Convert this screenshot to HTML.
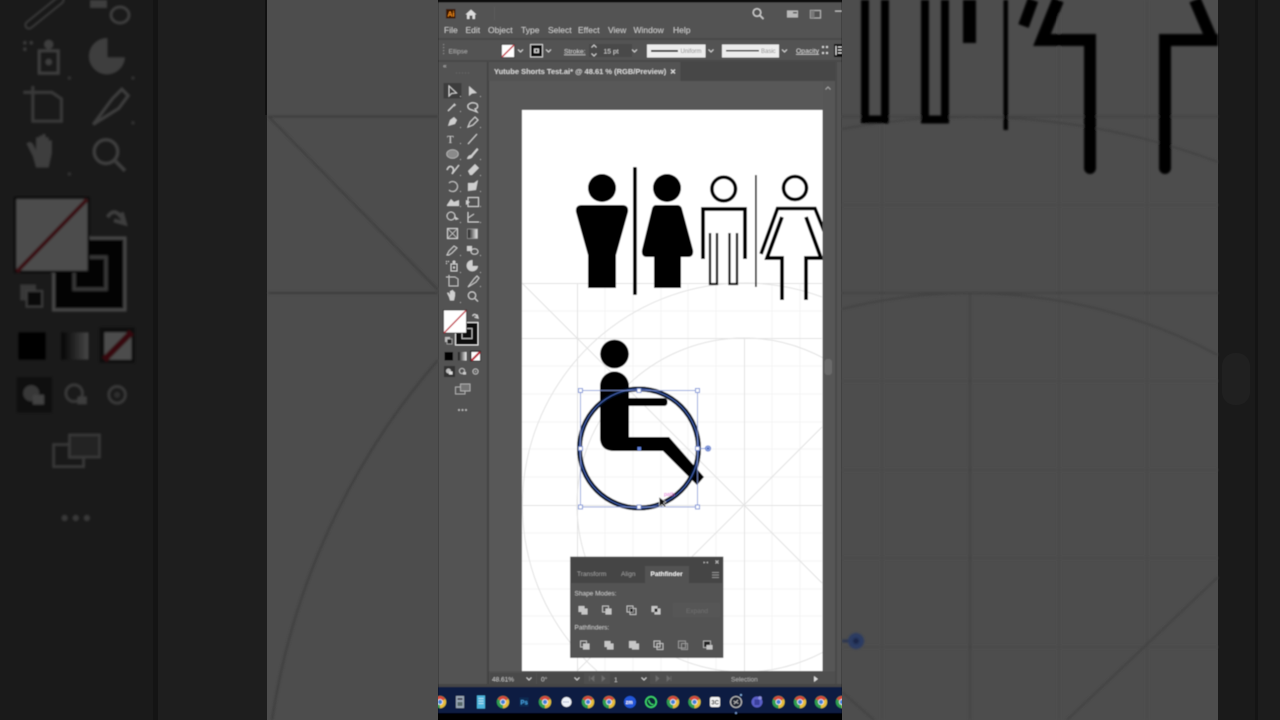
<!DOCTYPE html>
<html><head><meta charset="utf-8"><title>Illustrator</title>
<style>
html,body{margin:0;padding:0;background:#000;width:1280px;height:720px;overflow:hidden}
svg{display:block}
text{font-family:"Liberation Sans",sans-serif}
</style></head><body>
<svg xmlns="http://www.w3.org/2000/svg" width="1280" height="720" viewBox="0 0 1280 720">
<defs>
<filter id="b1" filterUnits="userSpaceOnUse" x="0" y="0" width="1280" height="720"><feGaussianBlur stdDeviation="1.1"/></filter>
<filter id="b0" filterUnits="userSpaceOnUse" x="0" y="0" width="1280" height="720"><feGaussianBlur stdDeviation="0.4"/></filter>
<clipPath id="cMid"><rect x="438" y="0" width="404" height="720"/></clipPath>
<clipPath id="cArt"><rect x="522" y="110" width="300.500" height="561"/></clipPath>
<linearGradient id="gg" x1="0" x2="1" y1="0" y2="0"><stop offset="0" stop-color="#111"/><stop offset="1" stop-color="#eee"/></linearGradient>
<g id="chrome">
<circle r="6.200" fill="#2f9e4f"/>
<path d="M0 0L-5.300 -3A6.200 6.200 0 0 1 5.300 -3Z" fill="#d8463a"/>
<path d="M0 0L5.300 -3A6.200 6.200 0 0 1 0 6.200Z" fill="#e8bd3a"/>
<circle r="3" fill="#eee"/><circle r="2.200" fill="#3f7fd8"/>
</g>
<g id="tl">
<g fill="#cfcfcf">
<rect x="451" y="264" width="6" height="7" fill="none" stroke="#cfcfcf" stroke-width="1"/><circle cx="454" cy="262" r="1.500"/><circle cx="454" cy="267.500" r="1.100"/>
<rect x="446" y="261" width="1" height="1"/><rect x="448" y="261" width="1" height="1"/><rect x="446" y="263" width="1" height="1"/>
<path d="M472.500 260A5.700 5.700 0 1 0 478 266L472.500 266Z"/>
<path d="M449 275V286H458V279L455 277H446" fill="none" stroke="#bfbfbf" stroke-width="1"/>
<path d="M468 287L474 279L477 276L479 278L476 282Z" fill="none" stroke="#cfcfcf" stroke-width="1"/>
<path d="M449 297L447 293Q448 292 449 293L450 295V291H451V290.500H452V290H453V291H454V292H455V296L454 300.500H450Z"/>
<circle cx="472" cy="295.500" r="3.700" fill="none" stroke="#cfcfcf" stroke-width="1.100"/><path d="M475 298.500L478 301.500" stroke="#cfcfcf" stroke-width="1.200"/>
<g fill="#a8a8a8"><rect x="460" y="272" width="1" height="1"/><rect x="480" y="272" width="1" height="1"/><rect x="480" y="286" width="1" height="1"/><rect x="460" y="302" width="1" height="1"/></g>
</g>
<rect x="455.500" y="322.500" width="22.500" height="22.500" fill="#0a0a0a" stroke="#e8e8e8" stroke-width="1"/>
<rect x="462" y="328.500" width="10" height="10" fill="#0a0a0a" stroke="#b8b8b8" stroke-width="1"/>
<rect x="443.500" y="310" width="23" height="23" fill="#fff" stroke="#1a1a1a" stroke-width=".7"/>
<path d="M444 333L466 310.500" stroke="#c12c3c" stroke-width="1.300"/>
<path d="M472.500 316Q475 312 478 318M477 314.500L478 318L474.500 317" fill="none" stroke="#cfcfcf" stroke-width="1.200"/>
<rect x="445" y="337" width="5" height="5" fill="#bbb"/><rect x="447" y="339" width="5" height="5" fill="#222" stroke="#ccc" stroke-width=".6"/>
<rect x="444.500" y="352" width="8.500" height="8.500" fill="#050505"/>
<rect x="458" y="352" width="8.500" height="8.500" fill="url(#gg)"/>
<rect x="470" y="350.500" width="11" height="11" fill="#2e2e2e"/>
<rect x="471.500" y="352" width="8.500" height="8.500" fill="#fff"/>
<path d="M471.500 360.500L480 352" stroke="#b81f30" stroke-width="2"/>
<rect x="444" y="366" width="11" height="11" fill="#333"/>
<circle cx="448.500" cy="371" r="2.500" fill="#bbb"/><rect x="449" y="371.500" width="3.500" height="3" fill="#ddd"/>
<circle cx="462" cy="371" r="2.600" fill="none" stroke="#bbb" stroke-width="1"/><rect x="463" y="372" width="3" height="2.500" fill="#ccc"/>
<circle cx="475.500" cy="371.500" r="2.600" fill="none" stroke="#bbb" stroke-width="1"/><circle cx="475.500" cy="371.500" r="1" fill="#999"/>
<rect x="455.500" y="387" width="9.500" height="7" fill="#555" stroke="#bdbdbd" stroke-width=".8"/>
<rect x="460.500" y="384" width="9.500" height="7" fill="#747474" stroke="#bdbdbd" stroke-width=".8"/>
<g fill="#bdbdbd"><circle cx="459" cy="410" r="1"/><circle cx="462.500" cy="410" r="1"/><circle cx="466" cy="410" r="1"/></g>
</g>
</defs>
<rect width="1280" height="720" fill="#000"/>

<!-- LEFT zoomed dim side -->
<rect x="0" y="0" width="153" height="720" fill="#575757"/>
<rect x="153" y="0" width="5" height="720" fill="#434343"/>
<rect x="158" y="0" width="109" height="720" fill="#646464"/>
<rect x="265" y="0" width="3" height="115" fill="#3a3a3a"/>
<g filter="url(#b1)">
<use href="#tl" transform="matrix(3.18 0 0 3.2 -1395 -794)"/>
<path d="M29 25L60 0" stroke="#cfcfcf" stroke-width="9" stroke-linecap="round" fill="none"/>
<path d="M29 25L60 0" stroke="#555" stroke-width="6" stroke-linecap="round" fill="none"/>
<rect x="90" y="0" width="17" height="8" fill="#cfcfcf"/>
<ellipse cx="120" cy="15" rx="9" ry="8" fill="none" stroke="#cfcfcf" stroke-width="3"/>
</g>
<rect x="0" y="0" width="267" height="720" fill="#000" fill-opacity=".7"/>
<rect x="267" y="0" width="171" height="720" fill="#4d4d4d"/>
<g filter="url(#b1)" fill="none" stroke="#3e3e3e" stroke-width="2">
<path d="M268 116.500H438M268 293H438"/>
<path d="M268 116L438 290"/>
<path d="M272 720A706 710 0 0 1 438 360"/>
</g>

<!-- RIGHT zoomed dim side -->
<rect x="842" y="0" width="376" height="720" fill="#4d4d4d"/>
<rect x="1218" y="0" width="37" height="720" fill="#1a1a1a"/>
<rect x="1255" y="0" width="3" height="720" fill="#141414"/>
<rect x="1258" y="0" width="22" height="720" fill="#1c1c1c"/>
<rect x="1222" y="353" width="28" height="52" rx="13" fill="#202020"/>
<g filter="url(#b1)">
<g fill="none" stroke="#4a4a4a" stroke-width="1.500">
<path d="M882 0V720M1059 0V720M1147 0V720M842 205H1218M842 381H1218M842 470H1218M842 558H1218M842 647H1218"/>
</g>
<g fill="none" stroke="#424242" stroke-width="2">
<path d="M842 116.500H1218M842 293H1218M970 293V720"/>
<path d="M842 129A706 710 0 0 1 1218 162"/>
<path d="M842 309A531 534 0 0 1 1218 355"/>
<path d="M1218 577L1067 720M842 692L874 720"/>
</g>
<g fill="none" stroke="#000">
<path d="M865 0V119.500H885V0M925 0V119.500H945V0" stroke-width="8"/>
<path d="M1033 0L1023.500 26" stroke-width="11"/>
<path d="M1058 0L1042 40H1090V168" stroke-width="12"/>
<path d="M1165 168V40H1218M1195 0L1212 40" stroke-width="12"/>
</g>
<rect x="963" y="0" width="13" height="43" fill="#000"/>
<rect x="1003.500" y="0" width="4.500" height="130" fill="#000"/>
<circle cx="1090" cy="168" r="6" fill="#000"/><circle cx="1165" cy="168" r="6" fill="#000"/>
<path d="M842 641H850" stroke="#26324f" stroke-width="2.500"/>
<circle cx="856" cy="641" r="8" fill="#2a3a62"/><circle cx="856" cy="641" r="3" fill="#1a2746"/>
</g>

<!-- CENTRE -->
<g clip-path="url(#cMid)"><g filter="url(#b0)">
<rect x="438" y="0" width="404" height="720" fill="#535353"/>
<rect x="438" y="0" width="404" height="2.500" fill="#0c0c0c"/>
<rect x="446" y="9" width="9.500" height="9.500" fill="#3a1404"/>
<text x="447.500" y="16.500" font-size="7" font-weight="700" fill="#f08a1c">Ai</text>
<path d="M465.500 14.500L471 9.500L476.500 14.500H475V19H472.500V15.500H469.500V19H467V14.500Z" fill="#dcdcdc"/>
<rect x="494" y="7" width="1" height="13" fill="#5c5c5c"/>
<circle cx="757" cy="12.500" r="3.800" fill="none" stroke="#c8c8c8" stroke-width="1.500"/>
<path d="M760 15.500L763.500 19" stroke="#c8c8c8" stroke-width="1.600"/>
<rect x="787" y="10.500" width="11" height="7" fill="#b8b8b8"/><rect x="793" y="12" width="4" height="1.500" fill="#555"/>
<rect x="810.500" y="10.500" width="10" height="7.500" fill="none" stroke="#b0b0b0" stroke-width="1.200"/><rect x="810.500" y="10.500" width="4" height="7.500" fill="#777"/>
<rect x="835" y="10.500" width="7" height="1.300" fill="#bbb"/>
<g font-size="8.500" fill="#cccccc">
<text x="444" y="33">File</text><text x="465.500" y="33">Edit</text><text x="488" y="33">Object</text><text x="521" y="33">Type</text><text x="548" y="33">Select</text><text x="578" y="33">Effect</text><text x="608" y="33">View</text><text x="633.500" y="33">Window</text><text x="673" y="33">Help</text>
</g>
<rect x="438" y="38" width="404" height="2" fill="#4a4a4a"/>
<g fill="#8a8a8a"><rect x="443" y="44" width="1.200" height="1.200"/><rect x="443" y="47" width="1.200" height="1.200"/><rect x="443" y="50" width="1.200" height="1.200"/><rect x="443" y="53" width="1.200" height="1.200"/></g>
<text x="448.500" y="53.500" font-size="6.500" fill="#ababab">Ellipse</text>
<rect x="501.500" y="44.500" width="13" height="13" fill="#fff" stroke="#222" stroke-width=".6"/>
<path d="M502 57L514 45" stroke="#c22d3a" stroke-width="1.500"/>
<path d="M518 49.500L520.500 52L523 49.500M546 49.500L548.500 52L551 49.500M632 49.500L634.500 52L637 49.500M708.500 49.500L711 52L713.500 49.500M782 49.500L784.500 52L787 49.500" fill="none" stroke="#cfcfcf" stroke-width="1.100"/>
<rect x="530.500" y="44.500" width="12" height="12.500" fill="#0a0a0a" stroke="#e0e0e0" stroke-width=".9"/>
<rect x="534" y="48.500" width="5" height="4.500" fill="#ccc"/><rect x="535.500" y="49.800" width="2" height="2" fill="#111"/>
<text x="564" y="53.500" font-size="6.800" fill="#cfcfcf" text-decoration="underline">Stroke:</text>
<rect x="589" y="44" width="43" height="13" fill="#4a4a4a"/>
<path d="M591.500 47.500L594 45L596.500 47.500M591.500 53.500L594 56L596.500 53.500" fill="none" stroke="#d0d0d0" stroke-width="1"/>
<text x="603.500" y="53.300" font-size="6.800" fill="#d6d6d6">15 pt</text>
<rect x="647" y="44.500" width="58.500" height="13" fill="#ececec"/>
<rect x="651" y="50" width="27" height="1.800" fill="#111"/>
<text x="680.500" y="53" font-size="6" fill="#888">Uniform</text>
<rect x="722" y="44.500" width="57" height="13" fill="#ececec"/>
<rect x="726" y="50" width="33" height="1.500" fill="#111"/>
<text x="761" y="53" font-size="6" fill="#888">Basic</text>
<text x="796" y="53" font-size="6.800" fill="#d8d8d8" text-decoration="underline">Opacity</text>
<g fill="#d0d0d0"><rect x="822" y="46" width="2" height="2"/><rect x="826" y="46" width="2" height="2"/><rect x="822" y="52" width="2" height="2"/><rect x="826" y="52" width="2" height="2"/></g>
<rect x="834" y="44" width="8" height="13" fill="#111"/>
<path d="M836 46V55M838 47H842M838 50H842M838 53H842" stroke="#ddd" stroke-width="1.300"/>
<rect x="438" y="60" width="404" height="2" fill="#484848"/>
<text x="443" y="68" font-size="6.500" fill="#c0c0c0">«</text>
<g fill="#6e6e6e"><rect x="456" y="72.500" width="1" height="1"/><rect x="459" y="72.500" width="1" height="1"/><rect x="462" y="72.500" width="1" height="1"/><rect x="465" y="72.500" width="1" height="1"/><rect x="468" y="72.500" width="1" height="1"/></g>
<rect x="487" y="62" width="2" height="622" fill="#424242"/>
<rect x="489" y="62" width="346" height="19" fill="#464646"/>
<rect x="488.500" y="62" width="192" height="19" fill="#535353"/>
<text x="494" y="74" font-size="7.500" font-weight="700" fill="#d4d4d4">Yutube Shorts Test.ai* @ 48.61 % (RGB/Preview)</text>
<path d="M671 69.500L675 73.500M675 69.500L671 73.500" stroke="#e0e0e0" stroke-width="1.200"/>
<rect x="489" y="81" width="346" height="590" fill="#595959"/>
<rect x="823" y="81" width="12" height="590" fill="#565656"/>
<rect x="835" y="62" width="2" height="622" fill="#484848"/>
<rect x="837" y="62" width="5" height="622" fill="#535353"/>
<path d="M825.500 89.500L828 87L830.500 89.500" fill="none" stroke="#a5a5a5" stroke-width="1"/>
<rect x="824.500" y="359" width="7.500" height="16" rx="3" fill="#6a6a6a"/>
<rect x="522" y="110" width="300.500" height="561" fill="#fff"/>
<g clip-path="url(#cArt)">
<g stroke="#f1f1f1" stroke-width=".7" fill="none">
<path d="M605 283V671M633 283V671M661 283V671M688 283V671M716 283V671M772 283V671M800 283V671"/>
<path d="M522 366H822M522 394H822M522 422H822M522 449H822M522 477H822M522 533H822M522 561H822M522 589H822M522 616H822M522 644H822M522 311H822"/>
</g>
<g stroke="#e2e2e2" stroke-width="1" fill="none">
<path d="M522 283.500H822M522 338.500H822M522 505.500H822M577.500 283V671M744.500 338V671"/>
<path d="M577 505A167 167 0 1 1 744 672A167 167 0 0 1 577 505Z"/>
<path d="M597 671A222 222 0 0 1 822 297"/>
<path d="M522 283L744 505L822 427M744 505L822 583M744 505L577 671"/>
</g>
<circle cx="602" cy="188" r="14"/>
<path d="M582 205H622Q629 205 628 212L616 255V288H588V255L576 212Q575 205 582 205Z"/>
<rect x="633" y="167" width="3.800" height="128" rx="1"/>
<circle cx="667" cy="188" r="14"/>
<path d="M656 205H677Q681 205 682 209L693 250Q694 257 688 257H681V288H654V257H647Q641 257 642 250L652 209Q653 205 656 205Z"/>
<circle cx="723.700" cy="189" r="11.800" fill="none" stroke="#000" stroke-width="3.600"/>
<path d="M703 259V209H745V259" fill="none" stroke="#000" stroke-width="3.800"/>
<path d="M710 233V284H717V233M729.500 233V284H737V233" fill="none" stroke="#000" stroke-width="2.300"/>
<rect x="755" y="175" width="1.700" height="112"/>
<circle cx="795" cy="188" r="11.500" fill="none" stroke="#000" stroke-width="3.600"/>
<path d="M761 254L777.500 208.500H815L835 258" fill="none" stroke="#000" stroke-width="3.600"/>
<path d="M782 217L767 258H782V300M806 217L821 258H806V300" fill="none" stroke="#000" stroke-width="3.800"/>
<circle cx="614.500" cy="354" r="14.300"/>
<path d="M600 386A14.500 14.500 0 0 1 629 386V437H669L704 477L697 485L663 451H614Q600 451 600 437Z"/>
<path d="M625 398H664Q667.500 398 667.500 402Q667.500 406 664 406H625Z"/>
<circle cx="639" cy="448.500" r="59.500" fill="none" stroke="#05081c" stroke-width="5"/>
<circle cx="639" cy="448.500" r="59.500" fill="none" stroke="#4464b8" stroke-width="1"/>
<rect x="580.500" y="390.500" width="117" height="116.500" fill="none" stroke="#7f95d8" stroke-width=".8"/>
<path d="M698 448.500H708" stroke="#7f95d8" stroke-width=".8"/>
<circle cx="708" cy="448.500" r="2.800" fill="#8da3e2" stroke="#5a78cc" stroke-width=".6"/>
<circle cx="708" cy="448.500" r="1" fill="#3f5cb4"/>
<g fill="#fff" stroke="#5f7dd0" stroke-width=".8">
<rect x="578.500" y="388.500" width="4" height="4"/><rect x="637" y="388.500" width="4" height="4"/><rect x="695.500" y="388.500" width="4" height="4"/>
<rect x="578.500" y="446.500" width="4" height="4"/><rect x="695.500" y="446.500" width="4" height="4"/>
<rect x="578.500" y="505" width="4" height="4"/><rect x="637" y="505" width="4" height="4"/><rect x="695.500" y="505" width="4" height="4"/>
</g>
<rect x="637.500" y="447" width="3.500" height="3.500" fill="#5f80d8"/>
<text x="664" y="496" font-size="5.500" fill="#e060d0">path</text>
<path d="M659 497L659.500 507L662 504.500L665 507.500L666 506L663.500 503L666 502Z" fill="#111" stroke="#fff" stroke-width=".5"/>
</g>
<rect x="570.500" y="557" width="152.500" height="100.500" fill="#535353" stroke="#2f2f2f" stroke-width=".6"/>
<rect x="570.500" y="557" width="152.500" height="26" fill="#444"/>
<rect x="645" y="566" width="44" height="17" fill="#535353"/>
<path d="M703.500 561.500L705.500 562.500L703.500 563.500ZM708 561.500L706 562.500L708 563.500Z" fill="#bbb"/>
<path d="M715.500 560.500L718.500 563.500M718.500 560.500L715.500 563.500" stroke="#bbb" stroke-width=".9"/>
<path d="M712 572.500H719M712 575H719M712 577.500H719" stroke="#8f8f8f" stroke-width="1"/>
<g font-size="6.500">
<text x="577" y="576" fill="#9c9c9c">Transform</text><text x="621" y="576" fill="#9c9c9c">Align</text>
<text x="650.500" y="576" fill="#f0f0f0" font-weight="700">Pathfinder</text>
<text x="574.500" y="595.500" fill="#c8c8c8">Shape Modes:</text>
<text x="574.500" y="629.500" fill="#c8c8c8">Pathfinders:</text>
</g>
<rect x="673" y="603" width="47" height="14" fill="#575757"/>
<text x="686" y="613" font-size="6.500" fill="#6e6e6e">Expand</text>
<g fill="#c6c6c6">
<rect x="578.500" y="606" width="6" height="6"/><rect x="581.500" y="608.500" width="6" height="6"/>
<rect x="602.500" y="606" width="6" height="6" fill="none" stroke="#c6c6c6" stroke-width=".9"/><rect x="605.500" y="608.500" width="6" height="6"/>
<rect x="627" y="606" width="6" height="6" fill="none" stroke="#c6c6c6" stroke-width=".9"/><rect x="630" y="608.500" width="6" height="6" fill="none" stroke="#c6c6c6" stroke-width=".9"/><rect x="630" y="608.500" width="3" height="3.500" fill="#222"/>
<rect x="651.500" y="606" width="6" height="6"/><rect x="654.500" y="608.500" width="6" height="6"/><rect x="654.500" y="608.500" width="3" height="3.500" fill="#222"/>
<rect x="580.500" y="641" width="6" height="6" fill="none" stroke="#c6c6c6" stroke-width=".9"/><rect x="583" y="643.500" width="6.500" height="6"/>
<rect x="604.500" y="641" width="6" height="6"/><rect x="607" y="643.500" width="6.500" height="6"/>
<rect x="629" y="641" width="7" height="7"/><rect x="632" y="643.500" width="7" height="6"/>
<rect x="654" y="641" width="6" height="6" fill="none" stroke="#c6c6c6" stroke-width=".9"/><rect x="657" y="643.500" width="6" height="6" fill="none" stroke="#c6c6c6" stroke-width=".9"/>
<rect x="678.500" y="641" width="7" height="7" fill="none" stroke="#9c9c9c" stroke-width=".9"/><rect x="681.500" y="643.500" width="6" height="6" fill="none" stroke="#9c9c9c" stroke-width=".9"/>
<rect x="703.500" y="641" width="7" height="6.500" fill="#222" stroke="#c6c6c6" stroke-width=".8"/><rect x="706.500" y="645" width="6" height="4.500"/>
</g>
<rect x="489" y="671.500" width="346" height="14" fill="#505050"/>
<rect x="490" y="673" width="46" height="11" fill="#4a4a4a"/><rect x="537" y="673" width="47" height="11" fill="#4a4a4a"/><rect x="610" y="673" width="40" height="11" fill="#4a4a4a"/>
<g font-size="6.500" fill="#c8c8c8"><text x="492" y="681.500">48.61%</text><text x="541" y="681.500">0°</text><text x="614" y="682">1</text><text x="731" y="681.500" fill="#b0b0b0">Selection</text></g>
<path d="M526.500 677.500L529 680L531.500 677.500M574.500 677.500L577 680L579.500 677.500M641.500 677.500L644 680L646.500 677.500" fill="none" stroke="#d0d0d0" stroke-width="1"/>
<path d="M589.500 676V681M591 678.500L594 676V681ZM602 676V681L605 678.500ZM656 676V681L659 678.500ZM667 676V681L670 678.500ZM671 676V681" fill="#6e6e6e" stroke="#6e6e6e" stroke-width=".7"/>
<path d="M814 676V682L818 679Z" fill="#ddd"/>
<rect x="438" y="684" width="404" height="3" fill="#444"/>
<rect x="443.500" y="83" width="18" height="15.500" fill="#3e3e3e"/>
<g fill="#cfcfcf" stroke="none">
<path d="M449 86L449 96L451.500 93.500L456.500 93Z" fill="none" stroke="#d0d0d0" stroke-width="1"/>
<path d="M469 86V96L472 93.500L477 93Z"/>
<path d="M448 111L455 104" stroke="#cfcfcf" stroke-width="1.300"/><path d="M454 103l1 1.500l1.500 .5l-1.500 .5l-.5 1.500l-.5-1.500l-1.500-.5l1.500-.5z"/>
<path d="M468 105Q472 101 477 104Q479 108 475 109L477 112L472 110Q467 109 468 105Z" fill="none" stroke="#cfcfcf" stroke-width="1.200"/>
<path d="M448 126L450 120L454 117L457 120L455 124Z"/>
<path d="M468 127L470 122L475 117L478 120L473 125Z" fill="none" stroke="#cfcfcf" stroke-width="1.100"/>
<text x="447" y="143" font-size="11" style="font-family:'Liberation Serif',serif" fill="#cfcfcf">T</text>
<path d="M468 144L477 134" stroke="#cfcfcf" stroke-width="1.100"/>
<ellipse cx="452.500" cy="154" rx="5.800" ry="4.300" fill="#8a8a8a" stroke="#b8b8b8" stroke-width=".8"/>
<path d="M467 159Q468 155 471 155L477 148L478.500 149.500L473 156Q472 159 467 159Z"/>
<path d="M447 170Q449 165 452 167T452 174L459 165" fill="none" stroke="#cfcfcf" stroke-width="1.400"/>
<path d="M468 171L475 164L479 168L472 175H470Z"/>
<path d="M449 183A5 5 0 1 1 449 190" fill="none" stroke="#bfbfbf" stroke-width="1.100"/>
<path d="M468 191V183H474L478 180L476 190Z"/>
<path d="M447 205L451 199L454 202L459 200V206H447Z"/>
<rect x="468" y="197.500" width="10.500" height="9" fill="none" stroke="#cfcfcf" stroke-width="1"/><path d="M466 200L470 202L466 205Z"/>
<circle cx="451" cy="216" r="4" fill="none" stroke="#cfcfcf" stroke-width="1"/><path d="M454 216L459 219L455.500 220Z"/>
<path d="M468 212V222H479M468 218L474 214" fill="none" stroke="#cfcfcf" stroke-width="1"/>
<rect x="447.500" y="228.500" width="10" height="10" fill="none" stroke="#cfcfcf" stroke-width="1"/><path d="M448 229L457 238M457 229L448 238" stroke="#cfcfcf" stroke-width=".7"/>
<path d="M447 255L449 251L454 246L457 248L452 253L449 255Z" fill="none" stroke="#cfcfcf" stroke-width="1"/>
<rect x="467" y="246" width="5" height="5"/><ellipse cx="474.500" cy="251.500" rx="3.500" ry="2.800" fill="none" stroke="#cfcfcf" stroke-width="1"/>
<g fill="#a8a8a8"><rect x="460" y="96" width="1" height="1"/><rect x="480" y="96" width="1" height="1"/><rect x="460" y="111" width="1" height="1"/><rect x="480" y="127" width="1" height="1"/><rect x="460" y="143" width="1" height="1"/><rect x="460" y="127" width="1" height="1"/><rect x="460" y="159" width="1" height="1"/><rect x="480" y="159" width="1" height="1"/><rect x="460" y="175" width="1" height="1"/><rect x="480" y="175" width="1" height="1"/><rect x="460" y="191" width="1" height="1"/><rect x="480" y="191" width="1" height="1"/><rect x="460" y="206" width="1" height="1"/><rect x="480" y="206" width="1" height="1"/><rect x="460" y="222" width="1" height="1"/><rect x="480" y="222" width="1" height="1"/><rect x="460" y="255" width="1" height="1"/><rect x="480" y="255" width="1" height="1"/></g>
</g>
<rect x="467.500" y="229" width="10" height="9.500" fill="url(#gg)" stroke="#aaa" stroke-width=".6"/>
<use href="#tl"/>
<rect x="438" y="687" width="404" height="26" fill="#101d42"/>
<rect x="438" y="713" width="404" height="7" fill="#050505"/>
<use href="#chrome" x="440" y="702"/>
<rect x="456" y="696" width="8" height="12" fill="#9aa7b4"/><rect x="457.500" y="698" width="5" height="2" fill="#445"/><rect x="457.500" y="702" width="5" height="4" fill="#566"/>
<rect x="477" y="695.500" width="8" height="13" fill="#4cb3dd"/><path d="M478.500 698.500H483.500M478.500 701H483.500M478.500 703.500H483.500" stroke="#d8f0f8" stroke-width=".7"/>
<use href="#chrome" x="503" y="702"/>
<rect x="519.500" y="697.500" width="9" height="9" fill="#0a2a52"/><text x="520.500" y="704.500" font-size="6" font-weight="700" fill="#4aa6e6">Ps</text>
<use href="#chrome" x="545" y="702"/>
<circle cx="566.500" cy="702" r="5" fill="#eef2f8"/><path d="M563.500 702H569.500" stroke="#4060a0" stroke-width="1" stroke-dasharray="1 1"/>
<use href="#chrome" x="588" y="702"/><use href="#chrome" x="609" y="702"/>
<circle cx="630" cy="702" r="6" fill="#2256d8"/><text x="625.800" y="704" font-size="5" font-weight="700" fill="#fff">zm</text>
<circle cx="651" cy="702" r="5.200" fill="#0d2638" stroke="#3cd96a" stroke-width="1.500"/><path d="M648.500 700Q650 705 653.500 704.500" stroke="#3cd96a" stroke-width="1.300" fill="none"/>
<use href="#chrome" x="673" y="702"/><use href="#chrome" x="694.500" y="702"/>
<rect x="710" y="697" width="10" height="10" rx="2" fill="#f4f4f4"/><text x="711.300" y="704.500" font-size="6" font-weight="700" fill="#222">3C</text>
<circle cx="736" cy="702" r="5.500" fill="#1b2230" stroke="#c0c0c0" stroke-width="1.100"/><path d="M733.500 701L738.500 703.500M738 700L734 704" stroke="#bbb" stroke-width=".9"/>
<circle cx="741" cy="695" r="1" fill="#88b8e8"/><circle cx="736" cy="713" r="1" fill="#7aa0d8"/>
<circle cx="757" cy="702" r="5.500" fill="#5a5fc8"/><circle cx="760" cy="698" r="1.800" fill="#8a8fe0"/><rect x="754.500" y="699.500" width="5" height="5.500" fill="#3a3f9a"/>
<use href="#chrome" x="778.500" y="702"/><use href="#chrome" x="800" y="702"/><use href="#chrome" x="821" y="702"/><use href="#chrome" x="842" y="702"/>
</g></g>
</svg>
</body></html>
